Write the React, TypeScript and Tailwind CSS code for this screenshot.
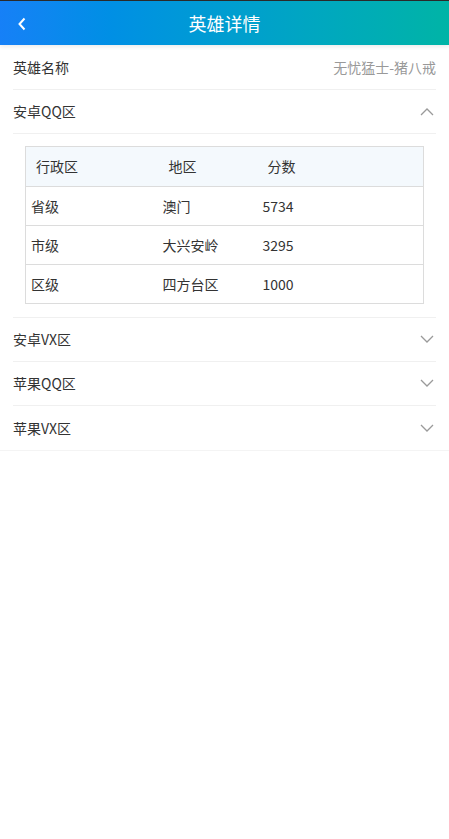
import React from 'react';

const font = { fontFamily: '"Noto Sans CJK SC", "Noto Sans", sans-serif' };

const rows = [
  { level: '省级', area: '澳门', score: '5734' },
  { level: '市级', area: '大兴安岭', score: '3295' },
  { level: '区级', area: '四方台区', score: '1000' },
];

const Chevron: React.FC<{ up?: boolean }> = ({ up }) => (
  <svg width="14" height="9" viewBox="0 0 14 9" fill="none" stroke="#9a9a9a" strokeWidth="1.3">
    {up ? <path d="M1 8l6-6 6 6" /> : <path d="M1 1l6 6 6-6" />}
  </svg>
);

const Section: React.FC<{ title: string; open?: boolean; last?: boolean }> = ({ title, open, last }) => (
  <div className={`flex h-[44px] items-center justify-between ${last ? '' : 'border-b border-[#f0f0f0]'}`}>
    <span className="text-[14px] text-[#333]">{title}</span>
    <span className="mr-[2px]">
      <Chevron up={open} />
    </span>
  </div>
);

export default function App() {
  return (
    <div className="min-h-[839px] bg-white" style={font}>
      <div className="relative flex h-[45px] items-center justify-center border-t border-[#2a2a2a] bg-gradient-to-r from-[#1680f7] to-[#00b4a6] shadow-[0_2px_4px_rgba(0,0,0,0.08)]">
        <svg className="absolute left-[17px] top-[16px]" width="10" height="14" viewBox="0 0 10 14" fill="none" stroke="white" strokeWidth="2">
          <path d="M7.5 1.5L2.5 7l5 5.5" />
        </svg>
        <span className="text-[18px] text-white">英雄详情</span>
      </div>

      <div className="border-b border-[#f4f4f4] px-[13px]">
        <div className="flex h-[45px] items-center justify-between border-b border-[#f0f0f0]">
          <span className="text-[14px] text-[#333]">英雄名称</span>
          <span className="text-[14px] text-[#999]">无忧猛士-猪八戒</span>
        </div>

        <Section title="安卓QQ区" open />
        <div className="border-b border-[#f0f0f0] pb-[13px] pl-[12px] pr-[12px] pt-[12px]">
          <table className="w-full border-collapse border border-[#dcdcdc] text-[14px] text-[#333]">
            <thead>
              <tr className="h-[40px] bg-[#f4f9fd]">
                <th className="w-[131px] pl-[10px] text-left font-normal">行政区</th>
                <th className="w-[99px] pl-[12px] text-left font-normal">地区</th>
                <th className="pl-[12px] text-left font-normal">分数</th>
              </tr>
            </thead>
            <tbody>
              {rows.map((r) => (
                <tr key={r.level} className="h-[39px] border-t border-[#dcdcdc]">
                  <td className="pl-[5px]">{r.level}</td>
                  <td className="pl-[6px]">{r.area}</td>
                  <td className="pl-[7px]">{r.score}</td>
                </tr>
              ))}
            </tbody>
          </table>
        </div>

        <Section title="安卓VX区" />
        <Section title="苹果QQ区" />
        <Section title="苹果VX区" last />
      </div>
    </div>
  );
}
